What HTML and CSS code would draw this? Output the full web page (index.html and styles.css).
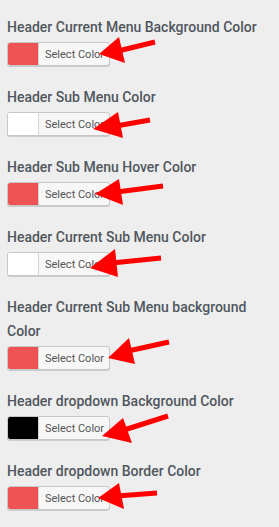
FILE: index.html
```html
<!DOCTYPE html>
<html>
<head>
<meta charset="utf-8">
<link rel="stylesheet" href="styles.css">
</head>
<body>
<div class="page">
  <div class="field">
    <div class="label">Header Current Menu Background Color</div>
    <button class="picker"><span class="swatch red"></span><span class="btn-text">Select Color</span></button>
  </div>
  <div class="field">
    <div class="label">Header Sub Menu Color</div>
    <button class="picker"><span class="swatch white"></span><span class="btn-text">Select Color</span></button>
  </div>
  <div class="field">
    <div class="label">Header Sub Menu Hover Color</div>
    <button class="picker"><span class="swatch red"></span><span class="btn-text">Select Color</span></button>
  </div>
  <div class="field">
    <div class="label">Header Current Sub Menu Color</div>
    <button class="picker"><span class="swatch white"></span><span class="btn-text">Select Color</span></button>
  </div>
  <div class="field">
    <div class="label">Header Current Sub Menu background Color</div>
    <button class="picker"><span class="swatch red"></span><span class="btn-text">Select Color</span></button>
  </div>
  <div class="field">
    <div class="label">Header dropdown Background Color</div>
    <button class="picker"><span class="swatch black"></span><span class="btn-text">Select Color</span></button>
  </div>
  <div class="field">
    <div class="label">Header dropdown Border Color</div>
    <button class="picker"><span class="swatch red"></span><span class="btn-text">Select Color</span></button>
  </div>

  <svg class="arrows" width="279" height="527" viewBox="0 0 279 527">
    <g fill="#ff0000" stroke="none">
      <polygon points="99,54 119,37 125,63"/>
      <polygon points="93,129 118,112 123,138"/>
      <polygon points="95,194 119,179 123,205"/>
      <polygon points="90,268 115,249 118,277"/>
      <polygon points="108,358 129,338 135,364"/>
      <polygon points="102,436 123,418 132,443"/>
      <polygon points="98,498 119,483 124,509"/>
    </g>
    <g stroke="#ff0000" stroke-width="5" fill="none">
      <line x1="118" y1="51" x2="155" y2="42"/>
      <line x1="116" y1="126" x2="150" y2="120"/>
      <line x1="117" y1="192" x2="163" y2="186"/>
      <line x1="112" y1="263" x2="161" y2="258"/>
      <line x1="128" y1="351" x2="169" y2="342"/>
      <line x1="124" y1="430" x2="168" y2="416"/>
      <line x1="117" y1="496" x2="157" y2="493"/>
    </g>
  </svg>
</div>
</body>
</html>
```

FILE: styles.css
```css
html, body {
  margin: 0;
  padding: 0;
  background: #eeeeee;
}

.page {
  position: relative;
  width: 279px;
  height: 527px;
  box-sizing: border-box;
  padding: 15px 8px 0 7px;
  font-family: Roboto, "Liberation Sans", sans-serif;
  display: flex;
  flex-direction: column;
  gap: 19px;
  overflow: hidden;
}

.field {
  display: flex;
  flex-direction: column;
  align-items: flex-start;
  gap: 3px;
}

.label {
  font-size: 14px;
  line-height: 24px;
  font-weight: 500;
  color: #50575e;
}

.picker {
  display: flex;
  align-items: stretch;
  width: 103px;
  height: 24px;
  padding: 0;
  margin: 0;
  border: 1px solid #c8c8c8;
  border-radius: 3px;
  background: #f7f7f7;
  box-shadow: 0 1px 0 #cccccc;
  overflow: hidden;
  box-sizing: border-box;
  cursor: pointer;
}

.swatch {
  width: 30px;
  border-right: 1px solid #d4d4d4;
}

.swatch.red { background: #ef5252; }
.swatch.white { background: #ffffff; }
.swatch.black { background: #000000; }

.btn-text {
  flex: 1;
  display: flex;
  align-items: center;
  padding-left: 6px;
  font-family: Roboto, "Liberation Sans", sans-serif;
  font-size: 11px;
  color: #555555;
}

.arrows {
  position: absolute;
  top: 0;
  left: 0;
  pointer-events: none;
}
```
